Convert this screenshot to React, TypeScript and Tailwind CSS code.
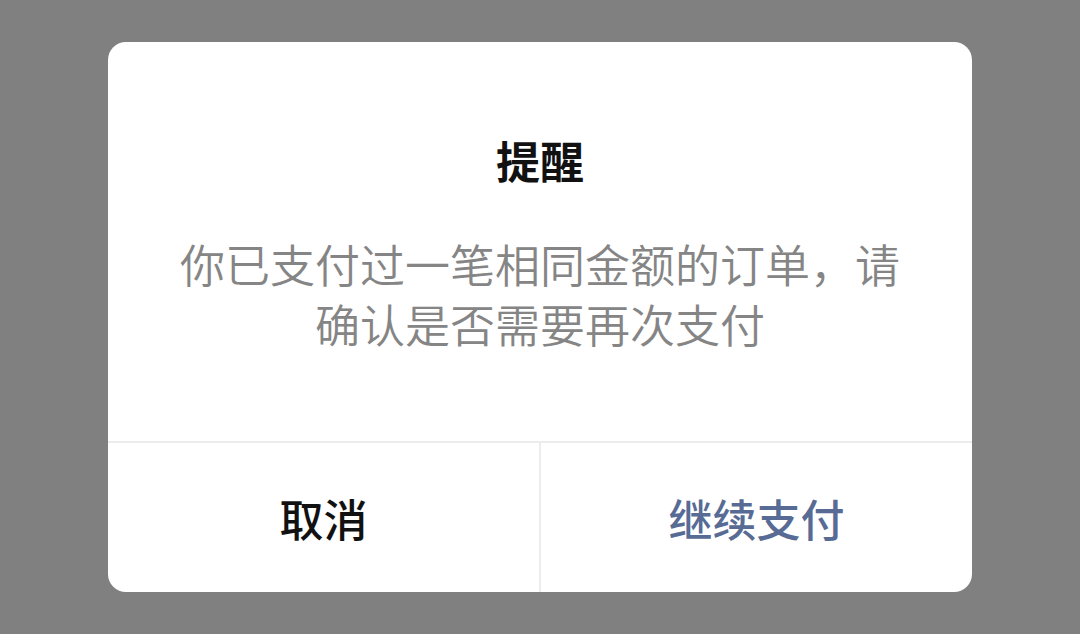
import React from "react";

const font = { fontFamily: '"Noto Sans CJK SC", "Noto Sans", sans-serif' };

export default function App() {
  return (
    <div
      className="flex h-[634px] w-full items-center justify-center bg-[#808080]"
      style={font}
    >
      <div className="flex w-[864px] flex-col overflow-hidden rounded-[18px] bg-white">
        {/* content */}
        <div className="flex h-[399px] flex-col items-center px-[64px] pt-[88px]">
          <div className="text-[44px] font-bold leading-[60px] text-[#111111]">
            提醒
          </div>
          <p className="mt-[44px] text-center text-[45px] font-[350] leading-[60px] text-[#858585]">
            你已支付过一笔相同金额的订单，请确认是否需要再次支付
          </p>
        </div>

        {/* actions */}
        <div className="flex h-[151px] border-t-2 border-[#ececec]">
          <button className="flex flex-1 items-center justify-center text-[44px] font-medium text-[#111111]">
            取消
          </button>
          <div className="w-[2px] bg-[#ececec]" />
          <button className="flex flex-1 items-center justify-center text-[44px] font-medium text-[#576b95]">
            继续支付
          </button>
        </div>
      </div>
    </div>
  );
}
